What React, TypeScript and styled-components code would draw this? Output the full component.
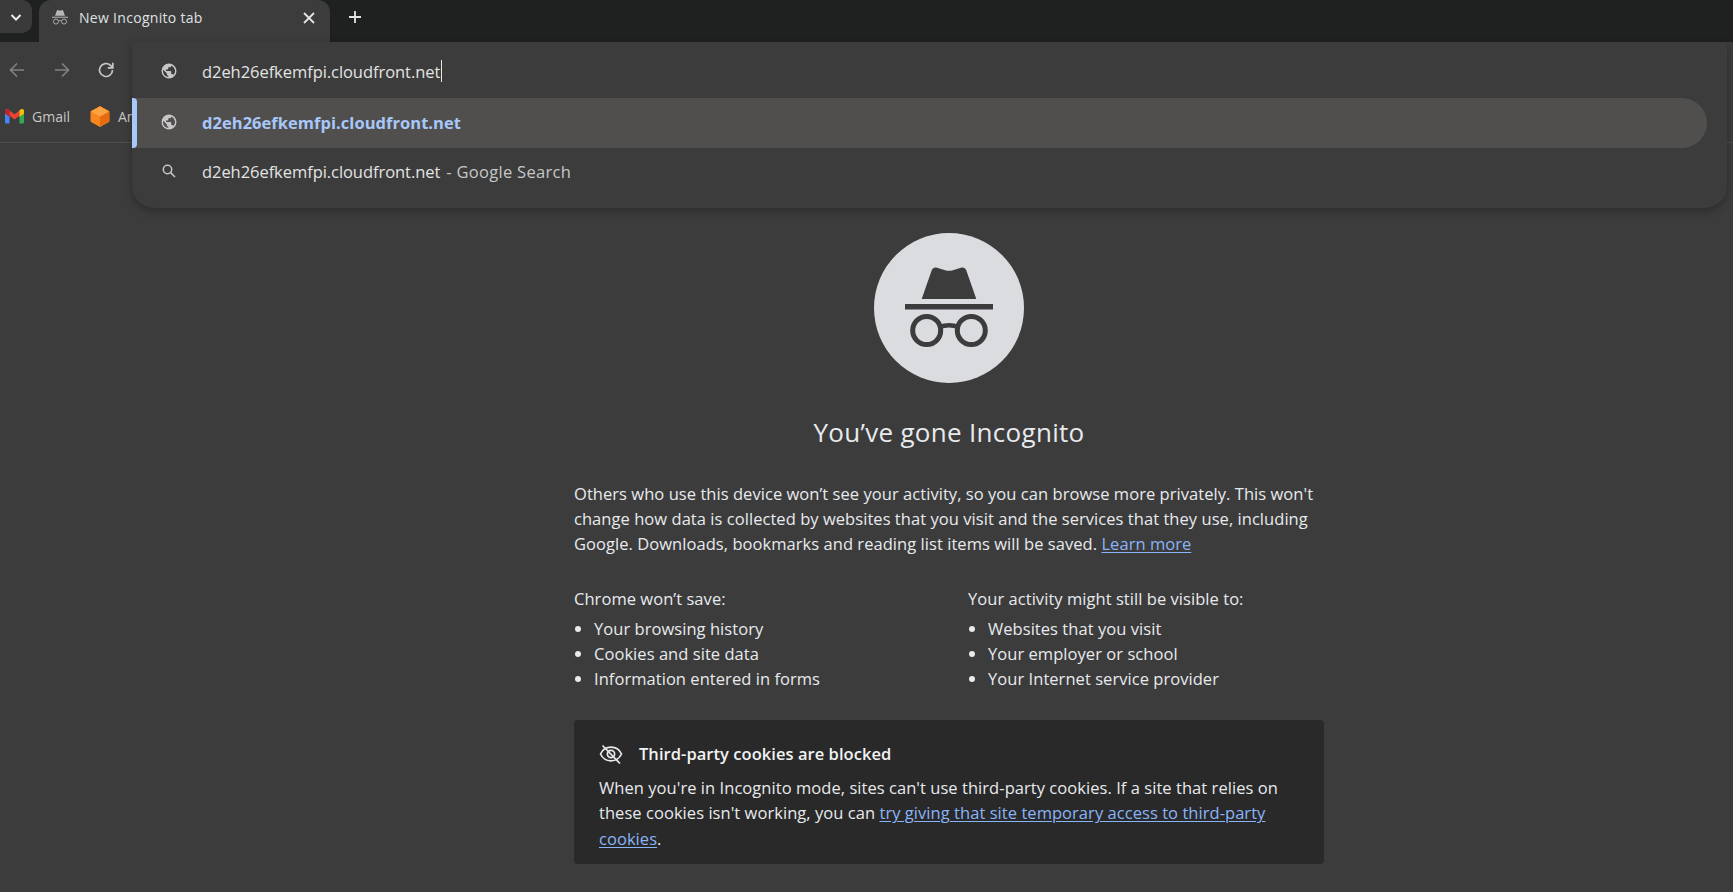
import React from "react";
import styled, { createGlobalStyle } from "styled-components";

const Global = createGlobalStyle`
  html, body { margin: 0; padding: 0; height: 100%; overflow: hidden; background: #3c3c3c; }
  * { box-sizing: border-box; }
  body { font-family: "Open Sans", "Noto Sans", "Liberation Sans", sans-serif; color: #e8eaed; }
`;

const Shell = styled.div`
  width: 1733px; height: 892px; position: relative; overflow: hidden;
  display: flex; flex-direction: column; background: #3c3c3c;
`;
const TabStrip = styled.div`
  height: 42px; background: #1f2120; display: flex; align-items: flex-start; flex: none;
`;
const TabSearch = styled.div`
  width: 32px; height: 33px; margin-right: 7px; background: #3a3a3a; border-radius: 0 10px 10px 0;
  display: flex; align-items: center; justify-content: center; color: #e8eaed;
`;
const Tab = styled.div`
  width: 291px; height: 42px; background: #3c3c3c; border-radius: 12px 12px 0 0;
  display: flex; align-items: center; padding: 0 14px 7px 13px; gap: 11px; flex: none;
`;
const TabTitle = styled.span`
  flex: 1; font-size: 14px; letter-spacing: 0.3px; color: #dfe1e3;
`;
const NewTab = styled.div`
  margin-left: 17px; height: 34px; display: flex; align-items: center; color: #e3e3e3;
`;
const Toolbar = styled.div`
  height: 56px; display: flex; align-items: center; padding-left: 8px; gap: 26.500px; flex: none; color: #7f8183;
`;
const Reload = styled.span`
  color: #c7c7c7; display: flex;
`;
const Bookmarks = styled.div`
  height: 45px; border-bottom: 1px solid #4e4f4f; display: flex; align-items: center;
  padding: 0 0 8px 5px; flex: none; gap: 8px;
`;
const Bookmark = styled.span`
  font-size: 14px; letter-spacing: 0; color: #c7c7c7; margin-right: 12px;
`;
const Page = styled.main`
  flex: 1; display: flex; flex-direction: column; align-items: center; padding: 90px 0 0 165px;
`;
const Hero = styled.div`
  width: 150px; height: 150px; border-radius: 50%; background: #dadce0; padding-bottom: 2px;
  display: flex; align-items: center; justify-content: center; flex: none;
`;
const Heading = styled.h1`
  margin: 28px 0 0; font-size: 26px; font-weight: 400; line-height: 42px; letter-spacing: 0.3px; color: #e8eaed;
`;
const Content = styled.div`
  width: 750px; margin-top: 28px; font-size: 16.5px; line-height: 25px; letter-spacing: 0.05px; color: #e8eaed;
`;
const Intro = styled.p`
  margin: 0;
`;
const Link = styled.a`
  color: #8ab4f8; text-decoration: underline; text-underline-offset: 2px;
`;
const Columns = styled.div`
  display: grid; grid-template-columns: 394px 1fr; margin-top: 30px;
`;
const ColTitle = styled.div`
  margin-bottom: 5px;
`;
const List = styled.ul`
  margin: 0; padding: 0 0 0 20px; list-style: disc;
`;
const Card = styled.section`
  margin-top: 29px; height: 144px; background: #292929; border-radius: 4px; padding: 21px 25px 0; line-height: 25.300px;
`;
const CardHead = styled.div`
  display: flex; align-items: center; gap: 16px; font-weight: 600; color: #f1f3f4; margin-bottom: 9px; height: 25px;
`;
const Popup = styled.div`
  position: absolute; left: 132px; top: 42px; width: 1595px; height: 166px;
  background: #3c3c3c; border-radius: 0 0 22px 22px; box-shadow: 0 3px 8px rgba(0,0,0,.28);
  display: flex; flex-direction: column;
`;
const InputRow = styled.div`
  height: 56px; display: flex; align-items: center; padding: 2px 0 0 27px; gap: 23px; flex: none;
`;
const Row = styled.div<{ $active?: boolean }>`
  height: 50px; width: 1575px; display: flex; align-items: center; gap: 23px; position: relative; flex: none;
  padding: 0 0 ${p => (p.$active ? 2 : 4)}px 27px;
  background: ${p => (p.$active ? "#504f4d" : "transparent")};
  border-radius: 0 25px 25px 0;
`;
const Marker = styled.span`
  position: absolute; left: 0; top: 0; bottom: 0; width: 5px; background: #a8c7fa; border-radius: 0 4px 4px 0;
`;
const Url = styled.span`
  font-size: 16.5px; letter-spacing: -0.06px; color: #e3e3e3; display: flex; align-items: center;
`;
const Caret = styled.span`
  display: inline-block; width: 1px; height: 22px; background: #e3e3e3; margin-left: 1px;
`;
const Match = styled.span`
  font-size: 16.5px; font-weight: 700; letter-spacing: 0.04px; color: #a8c7fa;
`;
const Suffix = styled.span`
  color: #c7c7c7; margin-left: 6px; letter-spacing: 0.3px;
`;
const IconSlot = styled.span`
  width: 20px; display: flex; justify-content: center; color: #c7c7c7; flex: none;
`;

const Globe = () => (
  <svg width="18" height="18" viewBox="0 0 24 24" fill="currentColor">
    <path d="M12 2a10 10 0 1 0 0 20 10 10 0 0 0 0-20zM4 12c0-.6.1-1.2.2-1.8L9 15v1c0 1.1.9 2 2 2v1.9A8 8 0 0 1 4 12zm13.9 5.4c-.3-.8-1-1.4-1.9-1.4h-1v-3c0-.6-.4-1-1-1H8v-2h2c.6 0 1-.4 1-1V7h2c1.1 0 2-.9 2-2v-.4a8 8 0 0 1 2.9 12.8z" />
  </svg>
);
const Search = () => (
  <svg width="18" height="18" viewBox="0 0 24 24" fill="none" stroke="currentColor" strokeWidth="2">
    <circle cx="10" cy="10" r="5.6" />
    <path d="M14.2 14.2 20 20" />
  </svg>
);
const Spy = ({ size, color, bg }: { size: number; color: string; bg: string }) => (
  <svg width={size} height={(size * 80) / 88} viewBox="0 0 88 80" fill="none">
    <path d="M16.700 32 26.300 4.400C27 1.600 29.500 0 32 .8l9 2.600c2 .6 4 .6 6 0l9-2.600c2.500-.8 5 .8 5.700 3.600L71.300 32z" fill={color} />
    <rect x="0" y="37" width="88" height="5.500" fill={color} />
    <circle cx="21.700" cy="63.500" r="14" stroke={color} strokeWidth="5" fill={bg} />
    <circle cx="66.300" cy="63.500" r="14" stroke={color} strokeWidth="5" fill={bg} />
    <path d="M35 60c5-2.500 13-2.500 18 0" stroke={color} strokeWidth="4.500" />
  </svg>
);
const EyeOff = () => (
  <svg width="24" height="24" viewBox="0 0 24 24" fill="none" stroke="#e8eaed" strokeWidth="1.700">
    <path d="M1.500 12C3.500 7.800 7.400 5.200 12 5.200S20.500 7.800 22.500 12c-2 4.200-5.900 6.800-10.500 6.800S3.500 16.200 1.500 12z" />
    <circle cx="12" cy="12" r="3.600" />
    <path d="M3.500 3.500l17.500 18" />
  </svg>
);
const GmailIcon = () => (
  <svg width="19" height="15" viewBox="0 0 19 15">
    <path d="M0 2C0 .4 1.900-.6 3.200.4L4.500 1.400V14.500H1.300C.6 14.500 0 13.900 0 13.200z" fill="#4285f4" />
    <path d="M19 2c0-1.600-1.900-2.600-3.200-1.600L14.500 1.400V14.500h3.200c.7 0 1.300-.6 1.300-1.300z" fill="#34a853" />
    <path d="M4.500 1.400 9.500 5.200l5-3.800V6.800L9.500 10.500 4.500 6.800z" fill="#ea4335" />
    <path d="M0 2v2.600l4.500 3.300V1.400L3.200.4C1.900-.6 0 .4 0 2z" fill="#c5221f" />
    <path d="M14.500 1.400 15.800.4C17.100-.6 19 .4 19 2v2.600l-4.500 3.300z" fill="#fbbc04" />
  </svg>
);
const Cube = () => (
  <svg width="20" height="21" viewBox="0 0 20 21">
    <path d="M10 0.500 19 5.500v10L10 20.500 1 15.500v-10z" fill="#f7861e" stroke="#f7861e" strokeLinejoin="round" />
    <path d="M10 10.500 19 5.500v10L10 20.500z" fill="#e56a10" />
    <path d="M10 .5 19 5.500l-9 5-9-5z" fill="#fba33f" />
  </svg>
);

export default function App() {
  return (
    <Shell>
      <Global />
      <TabStrip>
        <TabSearch>
          <svg width="14" height="14" viewBox="0 0 14 14" fill="none" stroke="currentColor" strokeWidth="2"><path d="M2.500 5 7 9.500 11.500 5" /></svg>
        </TabSearch>
        <Tab>
          <Spy size={16} color="#b5b6b8" bg="#3c3c3c" />
          <TabTitle>New Incognito tab</TabTitle>
          <svg width="14" height="14" viewBox="0 0 14 14" fill="none" stroke="#e3e3e3" strokeWidth="1.800"><path d="M2 2l10 10M12 2 2 12" /></svg>
        </Tab>
        <NewTab>
          <svg width="16" height="16" viewBox="0 0 16 16" fill="none" stroke="currentColor" strokeWidth="1.800"><path d="M8 2v12M2 8h12" /></svg>
        </NewTab>
      </TabStrip>
      <Toolbar>
        <svg width="18" height="18" viewBox="0 0 18 18" fill="none" stroke="currentColor" strokeWidth="1.700"><path d="M16 9H3M9 2.500 2.500 9 9 15.500" /></svg>
        <svg width="18" height="18" viewBox="0 0 18 18" fill="none" stroke="currentColor" strokeWidth="1.700"><path d="M2 9h13M9 2.500 15.500 9 9 15.500" /></svg>
        <Reload>
          <svg width="18" height="18" viewBox="0 0 18 18" fill="none" stroke="currentColor" strokeWidth="1.700"><path d="M15.500 9a6.500 6.500 0 1 1-2-4.700L15.500 6.200" /><path d="M15.800 1.800v5h-5" /></svg>
        </Reload>
      </Toolbar>
      <Bookmarks>
        <GmailIcon />
        <Bookmark>Gmail</Bookmark>
        <Cube />
        <Bookmark>Amazon</Bookmark>
      </Bookmarks>
      <Page>
        <Hero><Spy size={88} color="#3c3c3c" bg="#dadce0" /></Hero>
        <Heading>You’ve gone Incognito</Heading>
        <Content>
          <Intro>
            Others who use this device won’t see your activity, so you can browse more privately. This won't change how data is collected by websites that you visit and the services that they use, including Google. Downloads, bookmarks and reading list items will be saved. <Link>Learn more</Link>
          </Intro>
          <Columns>
            <div>
              <ColTitle>Chrome won’t save:</ColTitle>
              <List>
                <li>Your browsing history</li>
                <li>Cookies and site data</li>
                <li>Information entered in forms</li>
              </List>
            </div>
            <div>
              <ColTitle>Your activity might still be visible to:</ColTitle>
              <List>
                <li>Websites that you visit</li>
                <li>Your employer or school</li>
                <li>Your Internet service provider</li>
              </List>
            </div>
          </Columns>
          <Card>
            <CardHead><EyeOff />Third-party cookies are blocked</CardHead>
            When you're in Incognito mode, sites can't use third-party cookies. If a site that relies on these cookies isn't working, you can <Link>try giving that site temporary access to third-party cookies</Link>.
          </Card>
        </Content>
      </Page>
      <Popup>
        <InputRow>
          <IconSlot><Globe /></IconSlot>
          <Url>d2eh26efkemfpi.cloudfront.net<Caret /></Url>
        </InputRow>
        <Row $active>
          <Marker />
          <IconSlot><Globe /></IconSlot>
          <Match>d2eh26efkemfpi.cloudfront.net</Match>
        </Row>
        <Row>
          <IconSlot><Search /></IconSlot>
          <Url>d2eh26efkemfpi.cloudfront.net<Suffix>- Google Search</Suffix></Url>
        </Row>
      </Popup>
    </Shell>
  );
}
